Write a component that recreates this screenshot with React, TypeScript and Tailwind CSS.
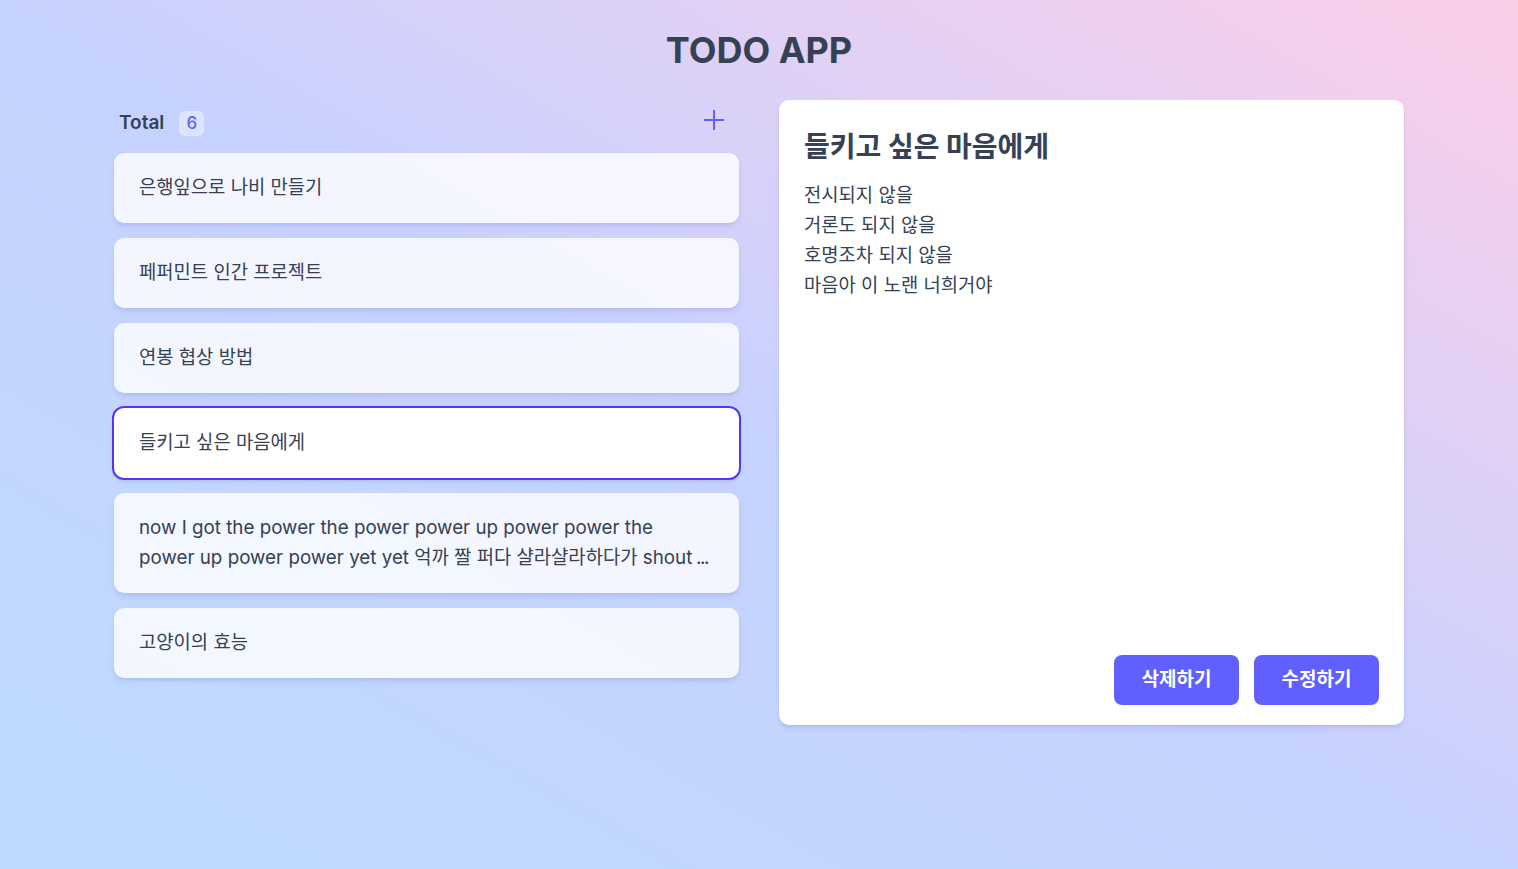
import React, { ReactElement, useState } from 'react';

type Todo = {
  id: number;
  title: string;
  content: string[];
};

const todos: Todo[] = [
  { id: 1, title: '은행잎으로 나비 만들기', content: ['은행잎을 모아 나비 모양으로 붙이기'] },
  { id: 2, title: '페퍼민트 인간 프로젝트', content: ['매일 아침 페퍼민트 차 마시기'] },
  { id: 3, title: '연봉 협상 방법', content: ['근거 자료 준비하기'] },
  {
    id: 4,
    title: '들키고 싶은 마음에게',
    content: ['전시되지 않을', '거론도 되지 않을', '호명조차 되지 않을', '마음아 이 노랜 너희거야'],
  },
  {
    id: 5,
    title:
      'now I got the power the power power up power power the power up power power yet yet 억까 짤 퍼다 샬라샬라하다가 shout out to my haters',
    content: ['now I got the power'],
  },
  { id: 6, title: '고양이의 효능', content: ['고양이는 귀엽다'] },
];

const MAX_TITLE = 105;

const font = { fontFamily: 'Inter, "Noto Sans CJK KR", sans-serif' };

const App = (): ReactElement => {
  const [selectedId, setSelectedId] = useState<number>(4);
  const selected = todos.find((t) => t.id === selectedId) ?? todos[0];

  return (
    <div
      className="min-h-screen w-full bg-gradient-to-tr from-blue-200 via-indigo-200 to-pink-200 text-gray-700"
      style={font}
    >
      <div className="mx-auto w-[1290px] pt-[30px]">
        <h1 className="mb-[30px] text-center text-4xl font-bold leading-10 text-gray-700">
          TODO APP
        </h1>
        <div className="grid grid-cols-2 gap-10">
          <div>
            <div className="mb-[6px] flex h-[47px] items-center justify-between pl-[5px] pr-[13px]">
              <div className="flex items-center gap-[15px]">
                <span className="text-[19px] font-semibold text-gray-700">Total</span>
                <span className="flex h-[25px] w-[25px] items-center justify-center rounded-md bg-white/40 text-[17px] font-medium text-indigo-500">
                  {todos.length}
                </span>
              </div>
              <button className="mb-[7px] flex h-6 w-6 items-center justify-center text-indigo-500">
                <svg width="22" height="22" viewBox="0 0 22 22" fill="none">
                  <path d="M11 1v20M1 11h20" stroke="currentColor" strokeWidth="2" />
                </svg>
              </button>
            </div>
            <ul className="flex flex-col gap-[15px]">
              {todos.map((todo) => {
                const active = todo.id === selectedId;
                const long = todo.title.length > MAX_TITLE;
                return (
                  <li
                    key={todo.id}
                    onClick={() => setSelectedId(todo.id)}
                    className={
                      active
                        ? 'cursor-pointer rounded-[10px] bg-white py-5 pl-[25px] pr-[27px] shadow-md ring-2 ring-indigo-600'
                        : 'cursor-pointer rounded-[10px] bg-white/80 py-5 pl-[25px] pr-[27px] shadow-md shadow-indigo-900/10'
                    }
                  >
                    <p className="text-[18.8px] leading-[30px] text-gray-700">
                      {long ? todo.title.slice(0, MAX_TITLE) : todo.title}
                      {long && <span className="tracking-[-1.5px]">{'\u00a0...'}</span>}
                    </p>
                  </li>
                );
              })}
            </ul>
          </div>
          <div className="flex h-[625px] flex-col rounded-[10px] bg-white px-[25px] pb-5 pt-[27px] shadow-md shadow-indigo-900/10">
            <h2 className="text-[28px] font-bold leading-10 text-gray-700">{selected.title}</h2>
            <div className="mt-[14px] flex-1">
              {selected.content.map((line, i) => (
                <p key={i} className="text-[18.8px] leading-[30px] text-gray-700">
                  {line}
                </p>
              ))}
            </div>
            <div className="flex justify-end gap-[15px]">
              <button className="h-[50px] w-[125px] rounded-lg bg-indigo-500 text-[19px] font-semibold text-white">
                삭제하기
              </button>
              <button className="h-[50px] w-[125px] rounded-lg bg-indigo-500 text-[19px] font-semibold text-white">
                수정하기
              </button>
            </div>
          </div>
        </div>
      </div>
    </div>
  );
};

export default App;
